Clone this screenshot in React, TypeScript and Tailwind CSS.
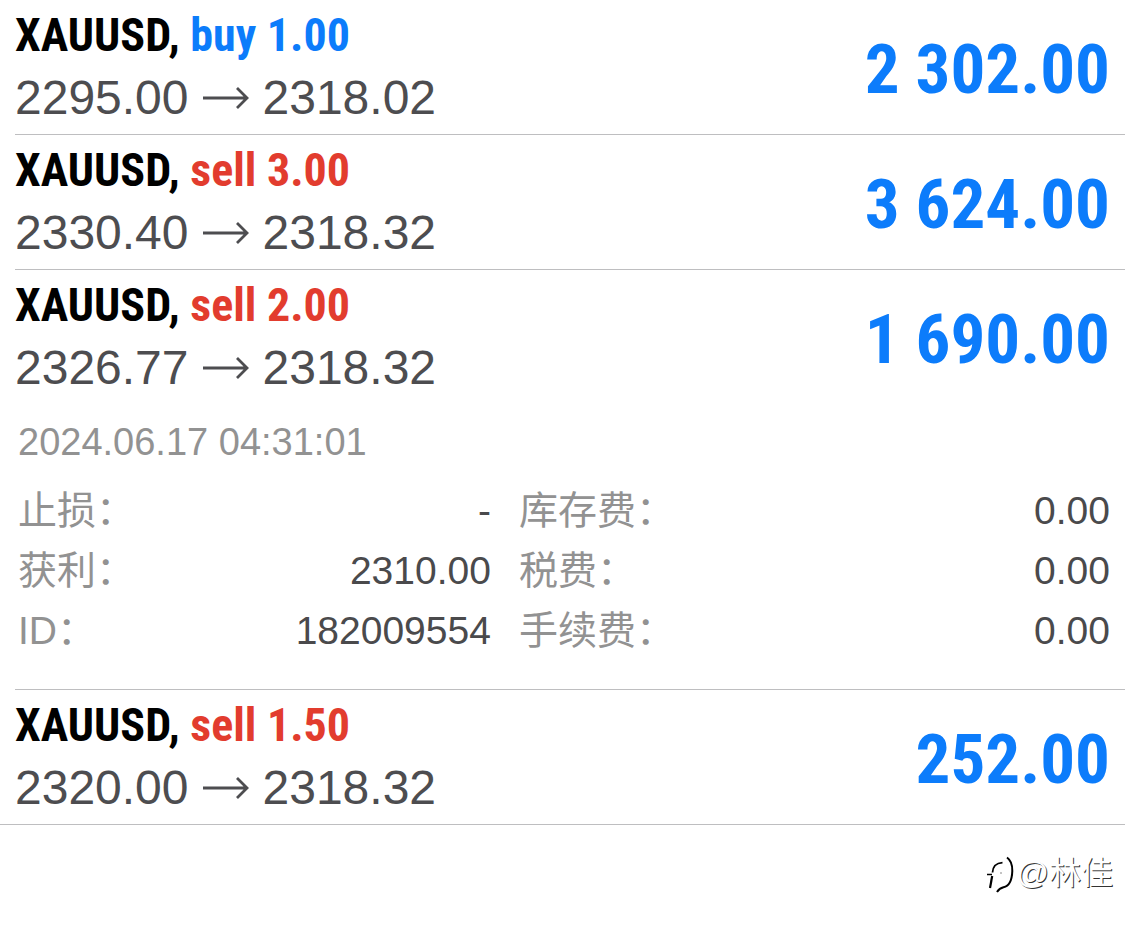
interface Detail {
  label: string;
  value: string;
}

interface Trade {
  id: string;
  symbol: string;
  side: 'buy' | 'sell';
  volume: string;
  open: string;
  close: string;
  profit: string;
  time?: string;
  details?: Detail[];
}

const trades: Trade[] = [
  { id: '1', symbol: 'XAUUSD', side: 'buy', volume: '1.00', open: '2295.00', close: '2318.02', profit: '2 302.00' },
  { id: '2', symbol: 'XAUUSD', side: 'sell', volume: '3.00', open: '2330.40', close: '2318.32', profit: '3 624.00' },
  {
    id: '3',
    symbol: 'XAUUSD',
    side: 'sell',
    volume: '2.00',
    open: '2326.77',
    close: '2318.32',
    profit: '1 690.00',
    time: '2024.06.17 04:31:01',
    details: [
      { label: '止损\uFF1A', value: '-' },
      { label: '库存费\uFF1A', value: '0.00' },
      { label: '获利\uFF1A', value: '2310.00' },
      { label: '税费\uFF1A', value: '0.00' },
      { label: 'ID\uFF1A', value: '182009554' },
      { label: '手续费\uFF1A', value: '0.00' },
    ],
  },
  { id: '4', symbol: 'XAUUSD', side: 'sell', volume: '1.50', open: '2320.00', close: '2318.32', profit: '252.00' },
];

function Arrow() {
  return (
    <svg viewBox="0 0 46 28" className="h-7 w-[46px]" fill="none" stroke="currentColor" strokeWidth="2.8" aria-hidden="true">
      <path d="M0 14H44M34 4L44 14L34 24" />
    </svg>
  );
}

function Logo() {
  return (
    <svg viewBox="0 0 32 40" className="h-10 w-8" fill="none" stroke="#000" aria-hidden="true">
      <path d="M7.5 19.5C8 13 10.5 10 17.5 9.6" strokeWidth="1.8" />
      <path d="M2 21.5H7" strokeWidth="1.5" />
      <path d="M7.2 23L5 35" strokeWidth="2.2" />
      <path d="M22 4.5C25.5 7 27.5 12 27.3 18C27 27 24.5 33 18.5 34.2C15.5 34.8 13.5 36.5 12 39" strokeWidth="2" />
      <path d="M15 20H17" stroke="#888" />
    </svg>
  );
}

function TradeRow({ trade }: { trade: Trade }) {
  return (
    <li className="ml-[15px] border-b border-[#bebec0] last:ml-0 last:pl-[15px]">
      <div className="flex h-[134px] items-center justify-between pr-[15px]">
        <div className="flex flex-col gap-[3px] pb-[2px]">
          <h2 className="font-['Roboto_Condensed','Roboto',sans-serif] text-[46px] leading-[60px] font-bold text-black">
            {trade.symbol},{' '}
            <span className={trade.side === 'buy' ? 'text-[#0c7cfb]' : 'text-[#e23c2e]'}>
              {trade.side} {trade.volume}
            </span>
          </h2>
          <p className="flex items-center gap-[14px] text-[48px] leading-[60px] text-[#4d4d50]">
            {trade.open}
            <Arrow />
            {trade.close}
          </p>
        </div>
        <strong className="pt-1.5 font-['Roboto_Condensed','Roboto',sans-serif] text-[69px] font-bold text-[#0c7cfb]">
          {trade.profit}
        </strong>
      </div>
      {trade.details && (
        <div className="pr-[15px] pb-7 pl-[3px]">
          <time className="block text-[38px] leading-[77px] text-[#929292]">{trade.time}</time>
          <dl className="grid grid-cols-[4fr_5fr] gap-x-7 text-[39px] leading-[60px]">
            {trade.details.map((d) => (
              <div key={d.label} className="flex justify-between">
                <dt className="text-[#929292]">{d.label}</dt>
                <dd className="text-[#4a4a4c]">{d.value}</dd>
              </div>
            ))}
          </dl>
        </div>
      )}
    </li>
  );
}

export default function App() {
  return (
    <main lang="zh-CN" className="min-h-screen bg-white font-['Liberation_Sans','Noto_Sans_CJK_SC',sans-serif]">
      <ul>
        {trades.map((trade) => (
          <TradeRow key={trade.id} trade={trade} />
        ))}
      </ul>
      <footer className="flex items-center justify-end pt-7 pr-3">
        <Logo />
        <span className="text-[32px] leading-10 text-white [text-shadow:1px_1px_0_#333]">@林佳</span>
      </footer>
    </main>
  );
}
